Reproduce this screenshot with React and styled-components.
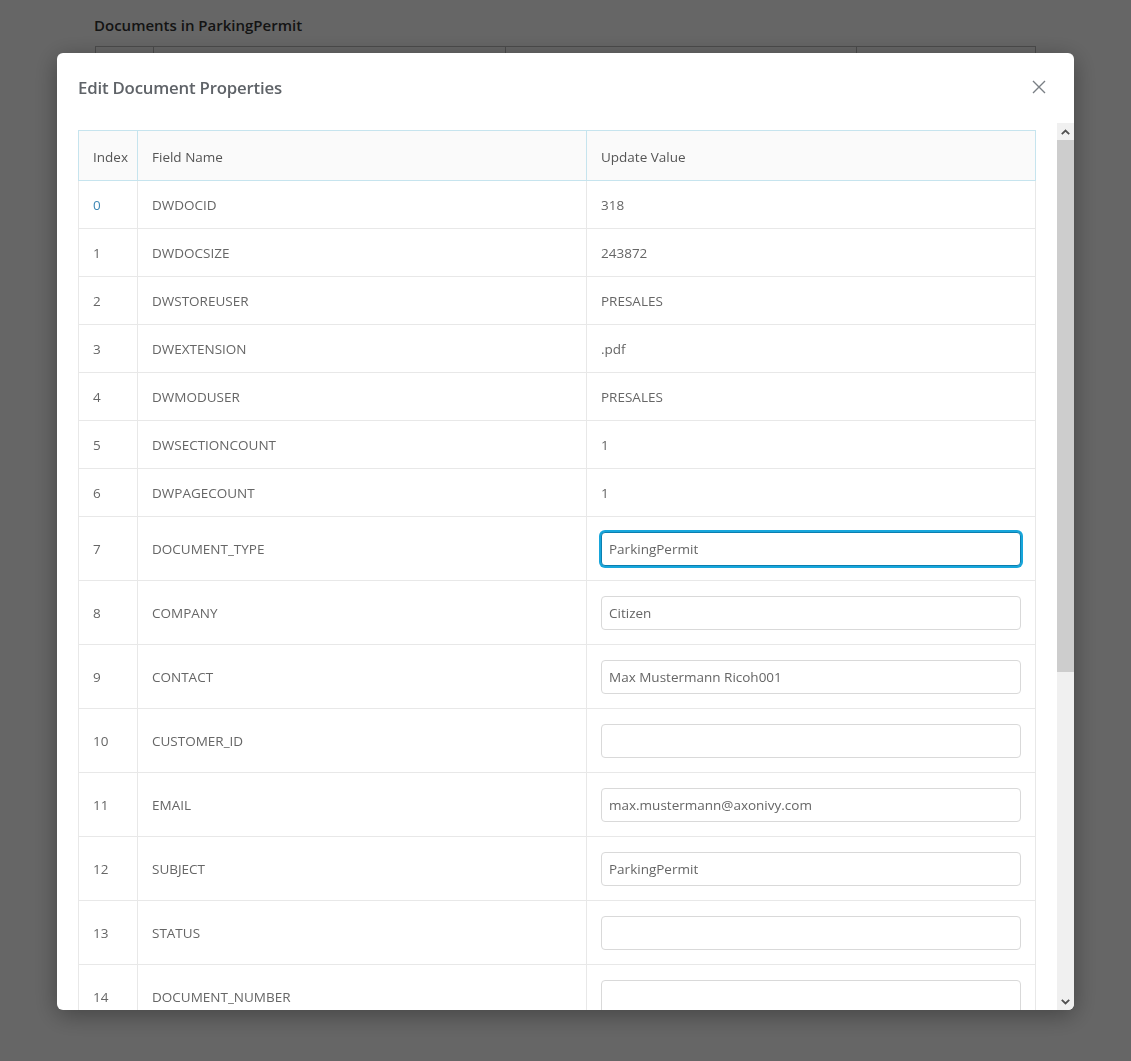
import React from "react";
import styled, { createGlobalStyle } from "styled-components";

const GlobalStyle = createGlobalStyle`
  html, body { margin: 0; padding: 0; background: #fff; }
  body { font-family: "Open Sans", "Noto Sans", sans-serif; }
  * { box-sizing: border-box; }
`;

const Page = styled.div`
  padding: 14px 95px 0 94px;
  height: 1061px;
  overflow: hidden;
`;

const PageTitle = styled.h2`
  margin: 0 0 10px 0;
  font-size: 15px;
  font-weight: 600;
  color: #333;
  line-height: 22px;
`;

const BgTable = styled.div`
  margin-left: 1px;
  display: grid;
  grid-template-columns: 58px 352px 351px 1fr;
  border: 1px solid #bbb;
  height: 60px;
`;

const BgCell = styled.div`
  border-right: 1px solid #bbb;
  &:last-child { border-right: none; }
`;

const Overlay = styled.div`
  position: fixed;
  inset: 0;
  background: rgba(0, 0, 0, 0.6);
`;

const Modal = styled.div`
  position: fixed;
  left: 57px;
  top: 53px;
  width: 1017px;
  height: 957px;
  background: #fff;
  border-radius: 6px;
  box-shadow: 0 5px 25px rgba(0, 0, 0, 0.35);
  display: flex;
  flex-direction: column;
  overflow: hidden;
`;

const Header = styled.div`
  height: 70px;
  flex: none;
  display: flex;
  align-items: center;
  justify-content: space-between;
  padding: 0 26px 2px 21px;
`;

const Title = styled.h3`
  margin: 0;
  font-size: 16.8px;
  font-weight: 600;
  color: #5f6368;
  letter-spacing: -0.2px;
`;

const CloseBtn = styled.button`
  border: none;
  background: none;
  padding: 0;
  width: 18px;
  height: 18px;
  display: flex;
  align-items: center;
  justify-content: center;
  cursor: pointer;
  color: #7a7f85;
`;

const BodyRow = styled.div`
  flex: 1;
  min-height: 0;
  display: flex;
`;

const Body = styled.div`
  flex: 1;
  overflow: hidden;
  padding: 7px 21px 24px 21px;
`;

const Scrollbar = styled.div`
  flex: none;
  width: 17px;
  background: #f0f0f0;
  display: flex;
  flex-direction: column;
`;

const ScrollBtn = styled.div`
  height: 17px;
  flex: none;
  display: flex;
  align-items: center;
  justify-content: center;
  color: #505050;
`;

const Thumb = styled.div`
  height: 532px;
  flex: none;
  background: #cdcdcd;
`;

const Track = styled.div`
  flex: 1;
`;

const Table = styled.table`
  width: 958px;
  border-collapse: collapse;
  table-layout: fixed;
  font-size: 13.5px;
  color: #666;
`;

const Th = styled.th`
  height: 50px;
  background: #fafafa;
  border: 1px solid #c6e4ee;
  text-align: left;
  font-weight: 500;
  padding: 2px 14px 0 14px;
  color: #555;
  width: ${(p) => p.$w || "auto"};
`;

const Td = styled.td`
  height: ${(p) => (p.$tall ? "64px" : "48px")};
  border: 1px solid #e8e8e8;
  padding: 0 14px;
  color: ${(p) => (p.$link ? "#3f88b5" : "#666")};
  white-space: nowrap;
`;

const Input = styled.input`
  display: block;
  width: 420px;
  height: 34px;
  border: 1px solid ${(p) => (p.$focus ? "#0b7fb0" : "#d9d9d9")};
  box-shadow: ${(p) => (p.$focus ? "0 0 0 2px #17a6db" : "none")};
  border-radius: 4px;
  padding: 0 7px;
  font-family: inherit;
  font-size: 13.5px;
  color: #666;
  outline: none;
  background: #fff;
`;

const plain = [
  ["DWDOCID", "318"],
  ["DWDOCSIZE", "243872"],
  ["DWSTOREUSER", "PRESALES"],
  ["DWEXTENSION", ".pdf"],
  ["DWMODUSER", "PRESALES"],
  ["DWSECTIONCOUNT", "1"],
  ["DWPAGECOUNT", "1"],
];

const editable = [
  ["DOCUMENT_TYPE", "ParkingPermit"],
  ["COMPANY", "Citizen"],
  ["CONTACT", "Max Mustermann Ricoh001"],
  ["CUSTOMER_ID", ""],
  ["EMAIL", "max.mustermann@axonivy.com"],
  ["SUBJECT", "ParkingPermit"],
  ["STATUS", ""],
  ["DOCUMENT_NUMBER", ""],
];

const CloseIcon = () => (
  <svg width="14" height="14" viewBox="0 0 14 14">
    <path d="M1 1 L13 13 M13 1 L1 13" stroke="currentColor" strokeWidth="1.4" fill="none" />
  </svg>
);

const Chevron = ({ dir }) => (
  <svg width="9" height="6" viewBox="0 0 9 6">
    <path
      d={dir === "up" ? "M0.8 5.2 L4.5 1.5 L8.2 5.2" : "M0.8 0.8 L4.5 4.5 L8.2 0.8"}
      stroke="currentColor"
      strokeWidth="1.8"
      fill="none"
    />
  </svg>
);

export default function App() {
  return (
    <>
      <GlobalStyle />
      <Page>
        <PageTitle>Documents in ParkingPermit</PageTitle>
        <BgTable>
          <BgCell />
          <BgCell />
          <BgCell />
          <BgCell />
        </BgTable>
      </Page>
      <Overlay />
      <Modal>
        <Header>
          <Title>Edit Document Properties</Title>
          <CloseBtn aria-label="Close">
            <CloseIcon />
          </CloseBtn>
        </Header>
        <BodyRow>
          <Body>
            <Table>
              <thead>
                <tr>
                  <Th $w="59px">Index</Th>
                  <Th $w="449px">Field Name</Th>
                  <Th>Update Value</Th>
                </tr>
              </thead>
              <tbody>
                {plain.map(([name, val], i) => (
                  <tr key={name}>
                    <Td $link={i === 0}>{i}</Td>
                    <Td>{name}</Td>
                    <Td>{val}</Td>
                  </tr>
                ))}
                {editable.map(([name, val], j) => (
                  <tr key={name}>
                    <Td $tall>{j + plain.length}</Td>
                    <Td $tall>{name}</Td>
                    <Td $tall>
                      <Input $focus={j === 0} defaultValue={val} />
                    </Td>
                  </tr>
                ))}
              </tbody>
            </Table>
          </Body>
          <Scrollbar>
            <ScrollBtn>
              <Chevron dir="up" />
            </ScrollBtn>
            <Thumb />
            <Track />
            <ScrollBtn>
              <Chevron dir="down" />
            </ScrollBtn>
          </Scrollbar>
        </BodyRow>
      </Modal>
    </>
  );
}
